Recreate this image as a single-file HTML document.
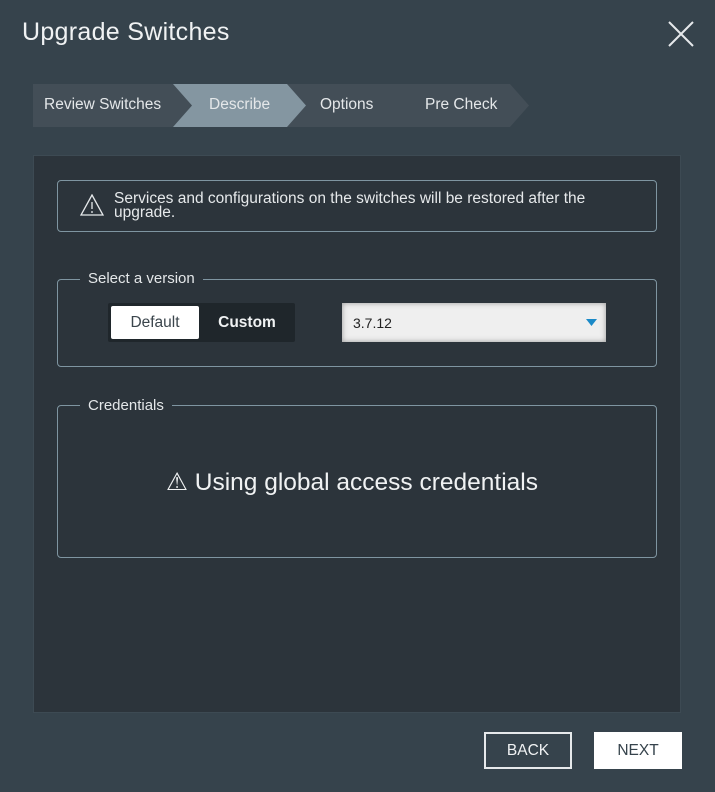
<!DOCTYPE html>
<html><head><style>
*{box-sizing:border-box;margin:0;padding:0}
body{width:715px;height:792px;background:#36434c;font-family:"Liberation Sans",sans-serif;color:#e6e9eb;position:relative;overflow:hidden}
.title{position:absolute;left:22px;top:18px;font-size:25px;letter-spacing:0.3px;color:#f0f2f3}
.close{position:absolute;left:668px;top:21px}
.steps{position:absolute;left:33px;top:84px;width:496px;height:43px}
.st{position:absolute;font-size:15.5px;color:#e4e7e9}
.panel{position:absolute;left:33px;top:155px;width:648px;height:558px;background:#2c343b;border:1px solid #3d4a53}
.box{position:absolute;border:1px solid #7f95a1;border-radius:4px}
.legend{position:absolute;background:#2c343b;padding:0 8px;font-size:15px;color:#e4e7e9}
.btn{position:absolute;top:732px;height:37px;font-size:15.5px;text-align:center}
</style></head><body>
<div class="title">Upgrade Switches</div>
<svg class="close" width="26" height="26"><path d="M1 1L25 25M25 1L1 25" stroke="#e6e9eb" stroke-width="2"/></svg>
<svg class="steps" width="496" height="43">
<polygon points="0,0 477,0 496,21.5 477,43 0,43" fill="#434e57"/>
<polygon points="140,0 254,0 273,21.5 254,43 140,43 159,21.5" fill="#8496a1"/>
</svg>
<div class="st" style="left:44px;top:96px">Review Switches</div>
<div class="st" style="left:209px;top:96px">Describe</div>
<div class="st" style="left:320px;top:96px">Options</div>
<div class="st" style="left:425px;top:96px">Pre Check</div>
<div class="panel"></div>
<div class="box" style="left:57px;top:180px;width:600px;height:52px"></div>
<svg style="position:absolute;left:80px;top:194px" width="24" height="22"><path d="M12 1L23 21H1Z" fill="none" stroke="#e6e9eb" stroke-width="1.3"/><path d="M12 8V15M12 17V19" stroke="#e6e9eb" stroke-width="1.3"/></svg>
<div style="position:absolute;left:114px;top:192px;font-size:15.5px;line-height:14px;width:500px">Services and configurations on the switches will be restored after the upgrade.</div>
<div class="box" style="left:57px;top:279px;width:600px;height:88px"></div>
<div class="legend" style="left:80px;top:270px">Select a version</div>
<div style="position:absolute;left:108px;top:303px;width:187px;height:39px;background:#1f262b;border-radius:2px"></div>
<div style="position:absolute;left:111px;top:306px;width:88px;height:33px;background:#fff;border-radius:2px;color:#3b454c;font-size:15.5px;text-align:center;line-height:33px">Default</div>
<div style="position:absolute;left:199px;top:306px;width:96px;height:33px;color:#f0f2f3;font-size:15.5px;font-weight:bold;text-align:center;line-height:33px">Custom</div>
<div style="position:absolute;left:342px;top:303px;width:264px;height:39px;background:#efefef;box-shadow:inset 0 0 6px #999;color:#222;font-size:14px;line-height:40px;padding-left:11px">3.7.12</div>
<svg style="position:absolute;left:586px;top:319px" width="11" height="7"><path d="M0 0H11L5.5 7Z" fill="#1b8ac8"/></svg>
<div class="box" style="left:57px;top:405px;width:600px;height:153px"></div>
<div class="legend" style="left:80px;top:397px">Credentials</div>
<div style="position:absolute;left:166px;top:467px;font-size:24.5px;color:#f0f2f3">⚠ Using global access credentials</div>
<div class="btn" style="left:484px;width:88px;border:2px solid #e6e9eb;color:#f0f2f3;line-height:33px">BACK</div>
<div class="btn" style="left:594px;width:88px;background:#fff;color:#36434c;line-height:37px">NEXT</div>
</body></html>
